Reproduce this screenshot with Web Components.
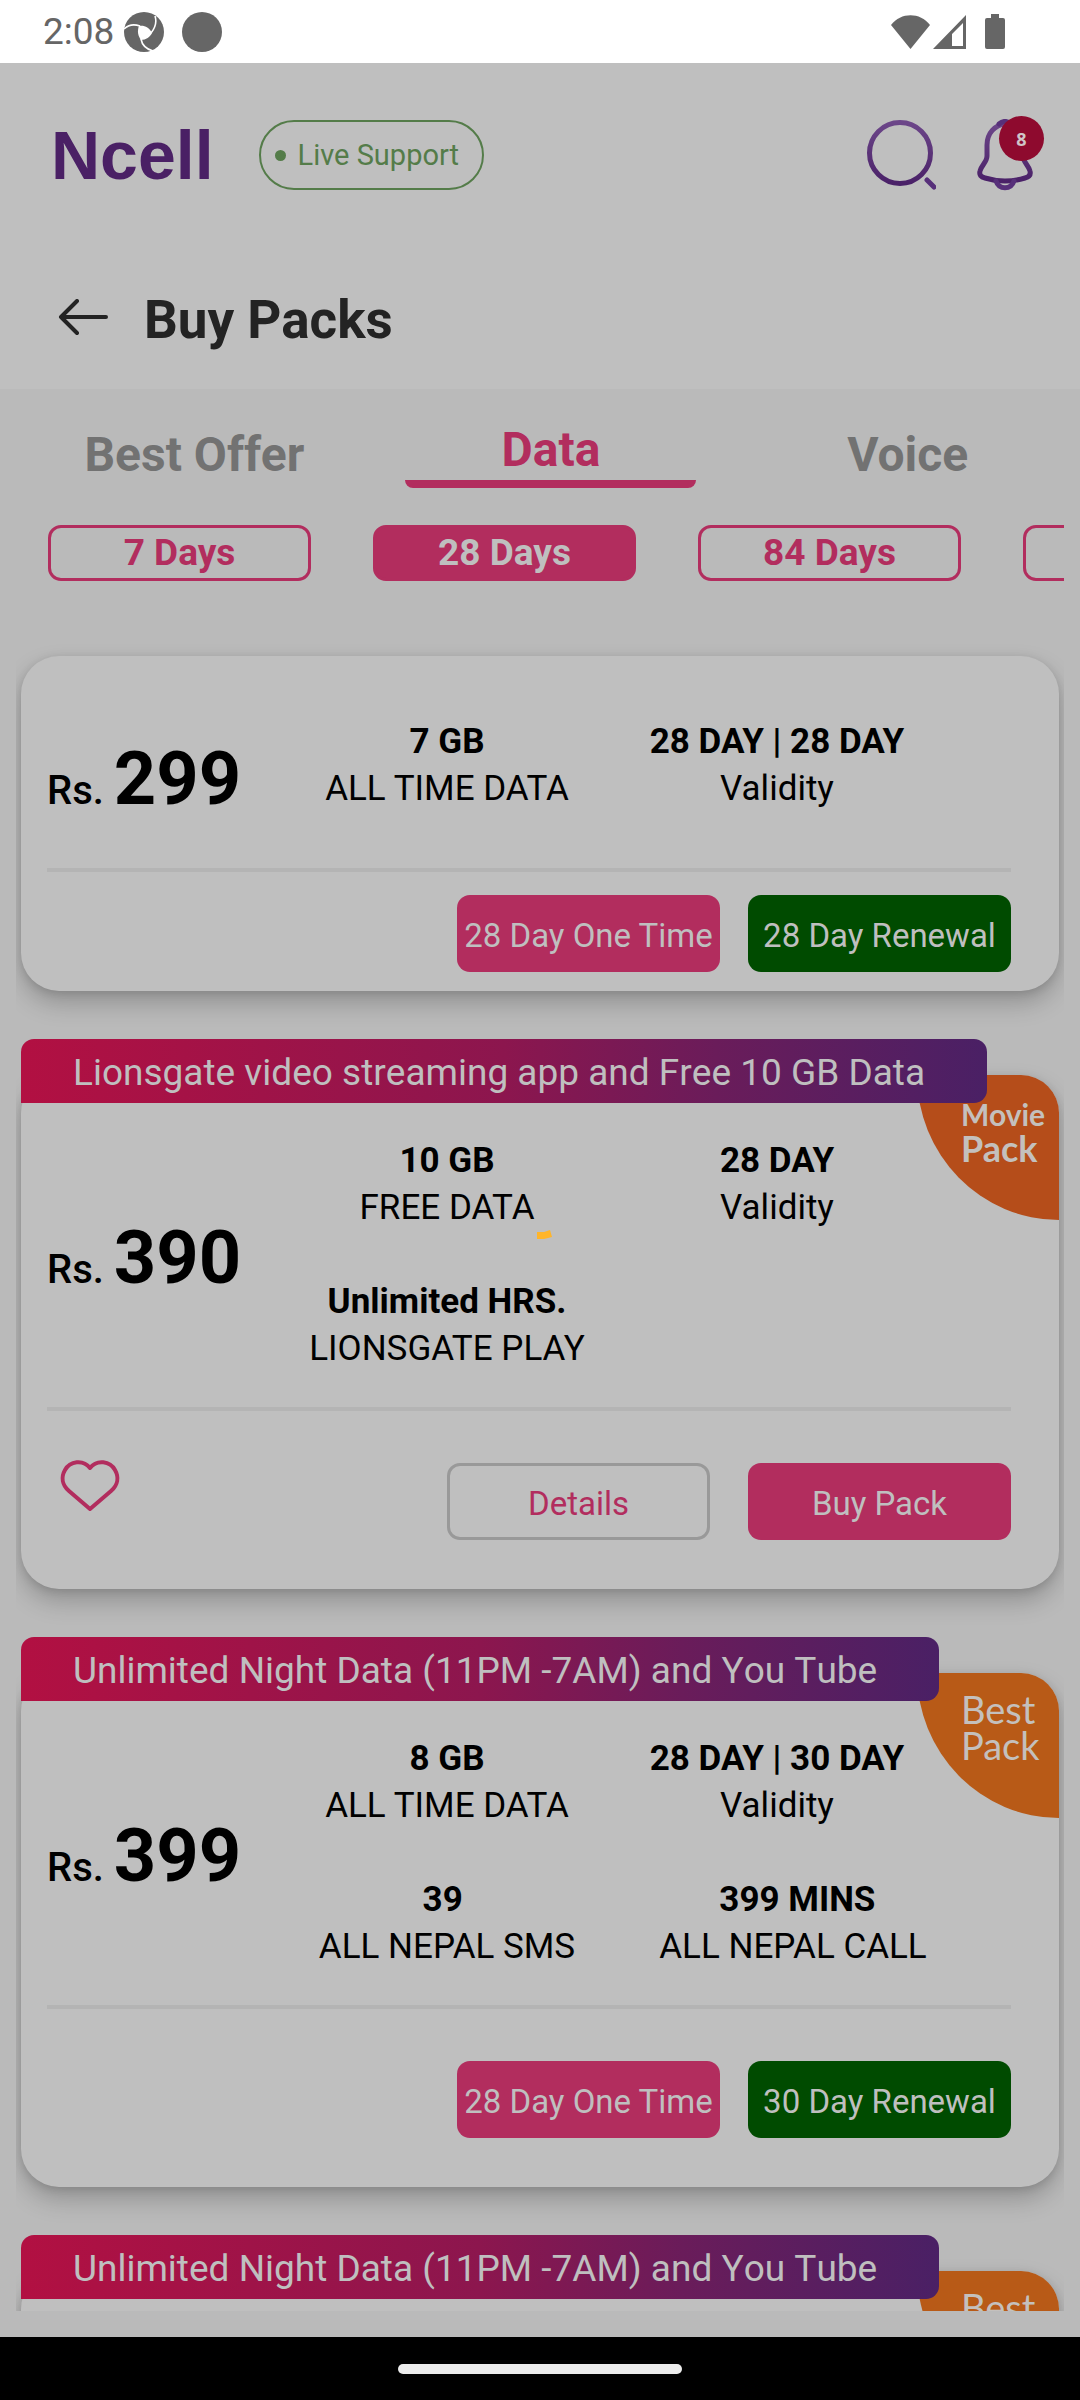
<!DOCTYPE html>
<html lang="en">
<head>
<meta charset="utf-8">
<meta name="viewport" content="width=device-width, initial-scale=1">
<title>Buy Packs</title>
<style>
  :root {
    --surface: #bfbfbf;
    --backdrop: #bababa;
    --pink: #b22d5e;
    --green: #004b00;
    --purple: #4a2065;
    --muted: #727272;
  }
  body { margin: 0; font-family: Roboto, sans-serif; background: var(--backdrop); color: #000; }
</style>
</head>
<body>
<ncell-app>
  <status-bar slot="status">2:08</status-bar>
  <app-header slot="header" count="8">Live Support</app-header>
  <page-title slot="title">Buy Packs</page-title>
  <tab-bar slot="tabs">
    <tab-item>Best Offer</tab-item>
    <tab-item active>Data</tab-item>
    <tab-item>Voice</tab-item>
  </tab-bar>
  <chip-row slot="chips">
    <day-chip>7 Days</day-chip>
    <day-chip active>28 Days</day-chip>
    <day-chip>84 Days</day-chip>
    <day-chip></day-chip>
  </chip-row>

  <pack-card compact price="299">
    <pack-stat value="7 GB">ALL TIME DATA</pack-stat>
    <pack-stat value="28 DAY | 28 DAY">Validity</pack-stat>
    <pack-button slot="actions">28 Day One Time</pack-button>
    <pack-button slot="actions" kind="renew">28 Day Renewal</pack-button>
  </pack-card>

  <pack-card price="390" favourite wide>
    <span slot="banner">Lionsgate video streaming app and Free 10 GB Data</span>
    <pack-badge slot="badge" kind="movie"><span>Movie</span><b>Pack</b></pack-badge>
    <pack-stat value="10 GB">FREE DATA</pack-stat>
    <pack-stat value="28 DAY">Validity</pack-stat>
    <pack-stat value="Unlimited HRS.">LIONSGATE PLAY</pack-stat>
    <pack-button slot="actions" kind="outline">Details</pack-button>
    <pack-button slot="actions">Buy Pack</pack-button>
  </pack-card>

  <pack-card price="399">
    <span slot="banner">Unlimited Night Data (11PM -7AM) and You Tube</span>
    <pack-badge slot="badge"><span>Best</span><span>Pack</span></pack-badge>
    <pack-stat value="8 GB">ALL TIME DATA</pack-stat>
    <pack-stat value="28 DAY | 30 DAY">Validity</pack-stat>
    <pack-stat value="39&nbsp;">ALL NEPAL SMS</pack-stat>
    <pack-stat value="&nbsp;399 MINS" indent>ALL NEPAL CALL</pack-stat>
    <pack-button slot="actions">28 Day One Time</pack-button>
    <pack-button slot="actions" kind="renew">30 Day Renewal</pack-button>
  </pack-card>

  <pack-card>
    <span slot="banner">Unlimited Night Data (11PM -7AM) and You Tube</span>
    <pack-badge slot="badge"><span>Best</span></pack-badge>
  </pack-card>

  <loading-spark slot="overlay"></loading-spark>
  <gesture-bar slot="nav"></gesture-bar>
</ncell-app>

<script>
const define = (name, html, setup) => {
  const template = document.createElement('template');
  template.innerHTML = html;
  customElements.define(name, class extends HTMLElement {
    constructor() {
      super();
      this.attachShadow({ mode: 'open' }).append(template.content.cloneNode(true));
    }
    connectedCallback() { if (setup) setup(this, this.shadowRoot); }
  });
};

define('ncell-app', `
<style>
  :host { display: flex; flex-direction: column; height: 100vh; position: relative; overflow: hidden; }
  main { flex: 1; min-height: 0; overflow: hidden; margin: 39px 16px 26px; padding: 36px 5px 0;
         display: flex; flex-direction: column; gap: 48px; }
</style>
<slot name="status"></slot>
<slot name="header"></slot>
<slot name="title"></slot>
<slot name="tabs"></slot>
<slot name="chips"></slot>
<main><slot></slot></main>
<slot name="nav"></slot>
<slot name="overlay"></slot>`);

define('status-bar', `
<style>
  :host { display: flex; align-items: center; height: 63px; flex: none; background: #fff; color: #666;
          padding: 0 75px 0 43px; box-sizing: border-box; font-size: 37px; line-height: 44px; }
  svg { display: block; fill: #666; }
  .round { margin-left: 10px; }
  .dot { margin-left: 18px; margin-right: auto; }
  .battery { margin-left: 19px; }
  .signal { margin-left: 3px; }
</style>
<span><slot></slot></span>
<svg class="round" width="40" height="40" viewBox="0 0 40 40">
  <circle cx="20" cy="20" r="20"/>
  <path fill="#fff" d="M15 14c5-1 10 1 13 7-2 4-6 7-11 7-3-4-4-9-2-14z"/>
  <path fill="none" stroke="#fff" stroke-width="1.6" d="M0 17c4-4 10-5 16-3M31 4c2 6 0 12-4 17M17 27c1 6 5 10 12 12"/>
  <path fill="none" stroke="#fff" stroke-width="1.6" d="M35 37h3"/>
</svg>
<svg class="dot" width="40" height="40" viewBox="0 0 40 40"><circle cx="20" cy="20" r="20"/></svg>
<svg width="39" height="34" viewBox="0 0 39 34"><path d="M0 10C10-3 29-3 39 10L19.500 34z"/></svg>
<svg class="signal" width="33" height="34" viewBox="0 0 33 34"><path fill-rule="evenodd" d="M33 0v34H0zM30 8 19 19v12h11z"/></svg>
<svg class="battery" width="20" height="35" viewBox="0 0 20 35"><path d="M6 0h8v4h4q2 0 2 2v27q0 2-2 2H2q-2 0-2-2V6q0-2 2-2h4z"/></svg>`);

define('app-header', `
<style>
  :host { display: flex; align-items: center; height: 184px; flex: none; background: var(--surface);
          padding: 0 39px 0 51px; box-sizing: border-box; }
  .logo { font: 700 68px/80px "Liberation Sans", sans-serif; color: var(--purple); text-decoration: none; }
  .live { margin: 0 auto 0 45px; height: 70px; padding: 0 23px 0 14px; border: 2px solid #547c49; border-radius: 35px;
          background: none; color: #547c49; font: 400 29px/34px Roboto, sans-serif; display: flex; align-items: center; gap: 12px; }
  .live::before { content: ""; width: 11px; height: 11px; border-radius: 50%; background: #547c49; }
  .icon { position: relative; width: 72px; height: 72px; padding: 0; border: 0; background: none; margin-left: 33px; }
  svg { display: block; fill: none; stroke-width: 5; stroke-linecap: round; }
  .count { position: absolute; left: 30px; top: -3px; width: 45px; height: 45px; border-radius: 50%;
           background: #8e0a2e; color: #d0c4c8; font: 700 18px/47px "Open Sans", sans-serif; text-align: center; }
</style>
<a class="logo" href="#">Ncell</a>
<button class="live"><slot></slot></button>
<button class="icon" aria-label="Search">
  <svg width="72" height="72" viewBox="0 0 72 72">
    <defs><linearGradient id="g" x1="0" y1="0" x2="0" y2="1"><stop offset="0" stop-color="#6c4689"/><stop offset="1" stop-color="#4a2168"/></linearGradient></defs>
    <ellipse cx="36" cy="34" rx="30.5" ry="30.5" stroke="url(#g)"/>
    <path d="m63 61 7 7" stroke="#57307a"/>
  </svg>
</button>
<button class="icon" aria-label="Notifications">
  <svg width="72" height="72" viewBox="0 0 72 72">
    <defs><linearGradient id="b" x1="0" y1="0" x2="0" y2="1"><stop offset="0" stop-color="#6c4689"/><stop offset="1" stop-color="#4a2168"/></linearGradient></defs>
    <path stroke="url(#b)" d="M36 5C26 6 18 14 18 26v11c0 6-6 10-7 15-1 4 1 6 5 7 13 4 27 4 40 0 4-1 6-3 5-7-1-5-7-9-7-15V26C54 14 46 6 36 5z"/>
    <path stroke="#57307a" d="M30 5q6-5 12 0M27 62c3 9 15 9 18 0"/>
  </svg>
  <span class="count"></span>
</button>`, (el, root) => { root.querySelector('.count').textContent = el.getAttribute('count'); });

define('page-title', `
<style>
  :host { display: flex; align-items: center; height: 142px; flex: none; background: var(--surface);
          padding: 0 58px; box-sizing: border-box; gap: 35px; }
  button { padding: 0; border: 0; background: none; }
  svg { display: block; fill: none; stroke: #232323; stroke-width: 4; stroke-linecap: round; stroke-linejoin: round; }
  h1 { margin: 0; padding-top: 4px; font-size: 53px; line-height: 62px; font-weight: 700; color: #232323; }
</style>
<button aria-label="Back"><svg width="51" height="38" viewBox="0 0 51 38"><path d="M48 18H3M19 2 3 18l16 16"/></svg></button>
<h1><slot></slot></h1>`);

define('tab-bar', `
<style>
  :host { display: block; flex: none; overflow: hidden; padding: 33px 0 0 16px; }
  nav { display: grid; grid-template-columns: repeat(3, 1fr); align-items: center; margin-right: -6px; }
</style>
<nav><slot></slot></nav>`);

define('tab-item', `
<style>
  :host { display: flex; justify-content: center; }
  button { padding: 0; border: 0; background: none; color: var(--muted); font: 700 48px/56px Roboto, sans-serif; }
  :host([active]) button { color: var(--pink); display: flex; flex-direction: column; align-items: center; gap: 2px; }
  :host([active]) button::after { content: ""; width: 291px; height: 8px; background: var(--pink); border-radius: 0 0 12px 12px; }
</style>
<button><slot></slot></button>`);

define('chip-row', `
<style>
  :host { display: flex; flex: none; gap: 62px; margin: 37px 16px 0; padding-left: 32px; overflow: hidden; }
</style>
<slot></slot>`);

define('day-chip', `
<style>
  :host { display: block; flex: none; width: 263px; }
  button { width: 100%; height: 56px; padding: 0; border: 3px solid var(--pink); border-radius: 13px; background: none;
           color: var(--pink); font: 700 37px/44px Roboto, sans-serif; display: flex; align-items: center; justify-content: center; }
  :host([active]) button { background: var(--pink); color: var(--surface); }
</style>
<button><slot></slot></button>`);

define('pack-card', `
<style>
  :host { display: block; flex: none; --gap: 52px; --end: 49px; --stats-end: 35px; }
  :host([compact]) { --gap: 23px; --end: 19px; --stats-end: 56px; }
  .banner { display: flex; position: relative; z-index: 1; width: fit-content; height: 64px; align-items: center; box-sizing: border-box;
            margin-bottom: -28px; padding: 4px 62px 0 52px; border-radius: 13px 13px 13px 0; color: var(--surface);
            font-size: 37px; line-height: 44px; font-kerning: none; white-space: nowrap;
            background: linear-gradient(90deg, #b21042, #8c164e 50%, #6a1c5a 72%, #4a2065); }
  article { position: relative; background: var(--surface); border-radius: 38px;
            box-shadow: 0 12px 24px rgba(0,0,0,.22), 0 2px 8px rgba(0,0,0,.12); padding: 0 48px 0 26px; min-height: 335px; box-sizing: border-box; }
  .info { display: flex; align-items: center; border-bottom: 4px solid #b4b4b4; }
  .price { flex: 0 0 235px; padding-top: 46px; font-size: 40px; line-height: 86px; font-weight: 500; white-space: nowrap; }
  .price b { font-size: 74px; font-weight: 700; }
  .stats { flex: 1; display: grid; grid-template-columns: 1fr 1fr; row-gap: 47px; padding: 62px 69px var(--stats-end) 0; }
  footer { display: flex; justify-content: flex-end; gap: 28px; padding: var(--gap) 0 var(--end); }
  :host([wide]) footer { gap: 38px; }
  .heart { margin-right: auto; margin-left: 13px; padding: 0; border: 0; background: none; height: 53px; }
  .heart svg { display: block; overflow: visible; fill: none; stroke: var(--pink); stroke-width: 4; stroke-linejoin: round; }
  [hidden] { display: none; }
</style>
<div class="banner"><slot name="banner"></slot></div>
<article>
  <slot name="badge"></slot>
  <div class="info">
    <div class="price">Rs. <b></b></div>
    <div class="stats"><slot></slot></div>
  </div>
  <footer>
    <button class="heart" aria-label="Add to favourites"><svg width="60" height="53" viewBox="0 3 60 53"><path d="M30 49 9 31C2 25 1 17 5 10 10 1 23-1 30 8 37-1 50 1 55 10c4 7 3 15-4 21z"/></svg></button>
    <slot name="actions"></slot>
  </footer>
</article>`, (el, root) => {
  const price = el.getAttribute('price');
  root.querySelector('.price b').textContent = price;
  root.querySelector('.banner').hidden = el.hasAttribute('compact');
  root.querySelector('.heart').hidden = !el.hasAttribute('favourite');
  root.querySelector('.info').hidden = root.querySelector('footer').hidden = !price;
});

define('pack-stat', `
<style>
  :host { display: flex; flex-direction: column; align-items: center; font-size: 35px; line-height: 47px; white-space: nowrap; }
  :host([indent]) { padding-left: 32px; }
  b { font-weight: 700; }
</style>
<b></b><span><slot></slot></span>`, (el, root) => { root.querySelector('b').textContent = el.getAttribute('value'); });

define('pack-button', `
<style>
  :host { display: block; width: 263px; }
  button { width: 100%; height: 77px; padding: 4px 0 0; border: 0; border-radius: 13px; background: var(--pink); color: var(--surface);
           font: 400 33px/40px Roboto, sans-serif; white-space: nowrap; }
  :host([kind=renew]) button { background: var(--green); }
  :host([kind=outline]) button { background: none; color: var(--pink); border: 3px solid #999; }
</style>
<button><slot></slot></button>`);

define('pack-badge', `
<style>
  :host { position: absolute; top: 0; right: 0; width: 142px; height: 145px; box-sizing: border-box; padding: 18px 0 0 44px;
          display: flex; flex-direction: column; background: #b85a17; color: #c4c0bd; border-radius: 0 38px 0 100%;
          font: 400 38px/36px Lato, sans-serif; }
  :host([kind=movie]) { background: #b54d1a; padding-top: 21px; }
  :host([kind=movie]) ::slotted(span) { font-size: 30px; line-height: 36px; font-weight: 700; }
  :host([kind=movie]) ::slotted(b) { font-size: 36px; line-height: 32px; }
</style>
<slot></slot>`);

define('loading-spark', `
<style>
  :host { position: absolute; left: 536px; top: 1230px; }
  svg { display: block; fill: #ffb52a; }
</style>
<svg width="16" height="10" viewBox="0 0 16 10"><path d="M1 2h7l6-2 2 7-8 2H1z"/></svg>`);

define('gesture-bar', `
<style>
  :host { display: flex; flex: none; height: 63px; background: #000; align-items: center; justify-content: center; }
  div { width: 284px; height: 10px; border-radius: 5px; background: #ececec; }
</style>
<div></div>`);
</script>
</body>
</html>
